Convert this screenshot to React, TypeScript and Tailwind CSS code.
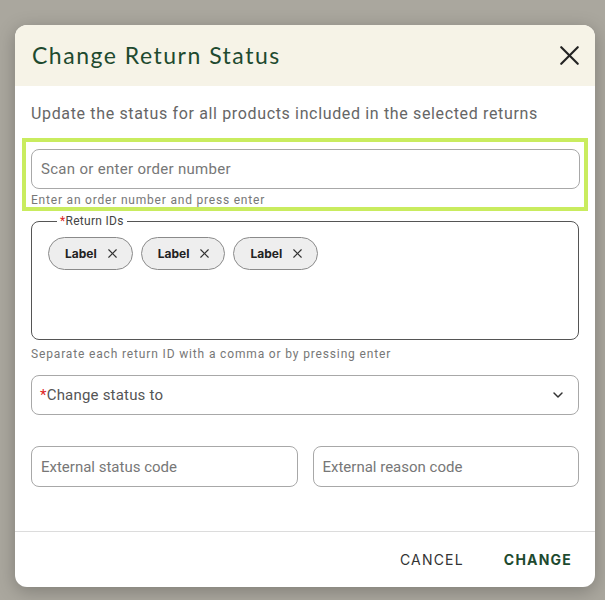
import { X, ChevronDown } from 'lucide-react'

const labels = ['Label', 'Label', 'Label']

function Chip({ text }: { text: string }) {
  return (
    <span className="flex items-center gap-[8px] h-[33px] pl-[16px] pr-[12px] rounded-full border border-[#8a8a8a] bg-[#eeeeee] text-[12px] font-bold text-[#222] font-['Inter',sans-serif]">
      {text}
      <X size={15} strokeWidth={1.8} className="text-[#333]" />
    </span>
  )
}

export default function App() {
  return (
    <div className="min-h-[600px] w-full bg-[#aaa79e] pt-[25px] px-[15px] font-['Roboto',sans-serif]">
      <div className="w-[580px] rounded-[12px] bg-white shadow-[0_4px_18px_rgba(0,0,0,0.25)] overflow-hidden">
        {/* Header */}
        <div className="flex items-center justify-between h-[61px] bg-[#f6f3e7] pl-[17px] pr-[9px]">
          <h2 className="text-[23px] text-[#1e4a2f] font-['Lato',sans-serif] tracking-[1.5px]">Change Return Status</h2>
          <button className="flex items-center justify-center">
            <X size={33} strokeWidth={1.6} className="text-[#222]" />
          </button>
        </div>

        {/* Body */}
        <div className="px-[16px] pt-[16px]">
          <p className="text-[16px] leading-[24px] text-[#666] tracking-[0.65px]">
            Update the status for all products included in the selected returns
          </p>

          {/* Order number scan */}
          <div className="mt-[12px] -mx-[9px] border-[4px] border-[#c9ec5f] pl-[5px] pr-[4px] pt-[7px]">
            <input
              placeholder="Scan or enter order number"
              className="w-full h-[40px] rounded-[8px] border border-[#a8a8a8] px-[9px] text-[15px] tracking-[0.3px] outline-none placeholder:text-[#777]"
            />
            <p className="mt-[4px] text-[12px] leading-[14px] text-[#777] tracking-[0.8px]">Enter an order number and press enter</p>
          </div>

          {/* Return IDs */}
          <fieldset className="mt-[2px] h-[127px] rounded-[8px] border border-[#555] px-[16px] pt-[8px]">
            <legend className="ml-[9px] px-[3px] text-[12px] leading-[16px] text-[#444] tracking-[0.3px]">
              <span className="text-[#d22]">*</span>Return IDs
            </legend>
            <div className="flex gap-[8px]">
              {labels.map((l, i) => (
                <Chip key={i} text={l} />
              ))}
            </div>
          </fieldset>
          <p className="mt-[6px] text-[12px] leading-[16px] text-[#777] tracking-[0.85px]">
            Separate each return ID with a comma or by pressing enter
          </p>

          {/* Status select */}
          <div className="mt-[13px] flex items-center justify-between h-[40px] rounded-[8px] border border-[#a8a8a8] pl-[8px] pr-[12px]">
            <span className="text-[15px] text-[#555] tracking-[0.2px]">
              <span className="text-[#d22]">*</span>Change status to
            </span>
            <ChevronDown size={16} strokeWidth={2.2} className="text-[#333]" />
          </div>

          {/* External codes */}
          <div className="mt-[31px] grid grid-cols-2 gap-[15px]">
            <input
              placeholder="External status code"
              className="h-[41px] rounded-[8px] border border-[#a8a8a8] px-[9px] text-[15px] outline-none placeholder:text-[#777]"
            />
            <input
              placeholder="External reason code"
              className="h-[41px] rounded-[8px] border border-[#a8a8a8] px-[9px] text-[15px] outline-none placeholder:text-[#777]"
            />
          </div>
        </div>

        {/* Footer */}
        <div className="mt-[44px] border-t border-[#dcdcdc] h-[56px] flex items-center justify-end gap-[24px] pr-[15px]">
          <button className="px-[8px] py-[6px] text-[14px] tracking-[1.2px] text-[#333] font-['Inter',sans-serif]">CANCEL</button>
          <button className="px-[8px] py-[6px] text-[14px] tracking-[1.2px] font-bold text-[#1e4a2f] font-['Inter',sans-serif]">CHANGE</button>
        </div>
      </div>
    </div>
  )
}
